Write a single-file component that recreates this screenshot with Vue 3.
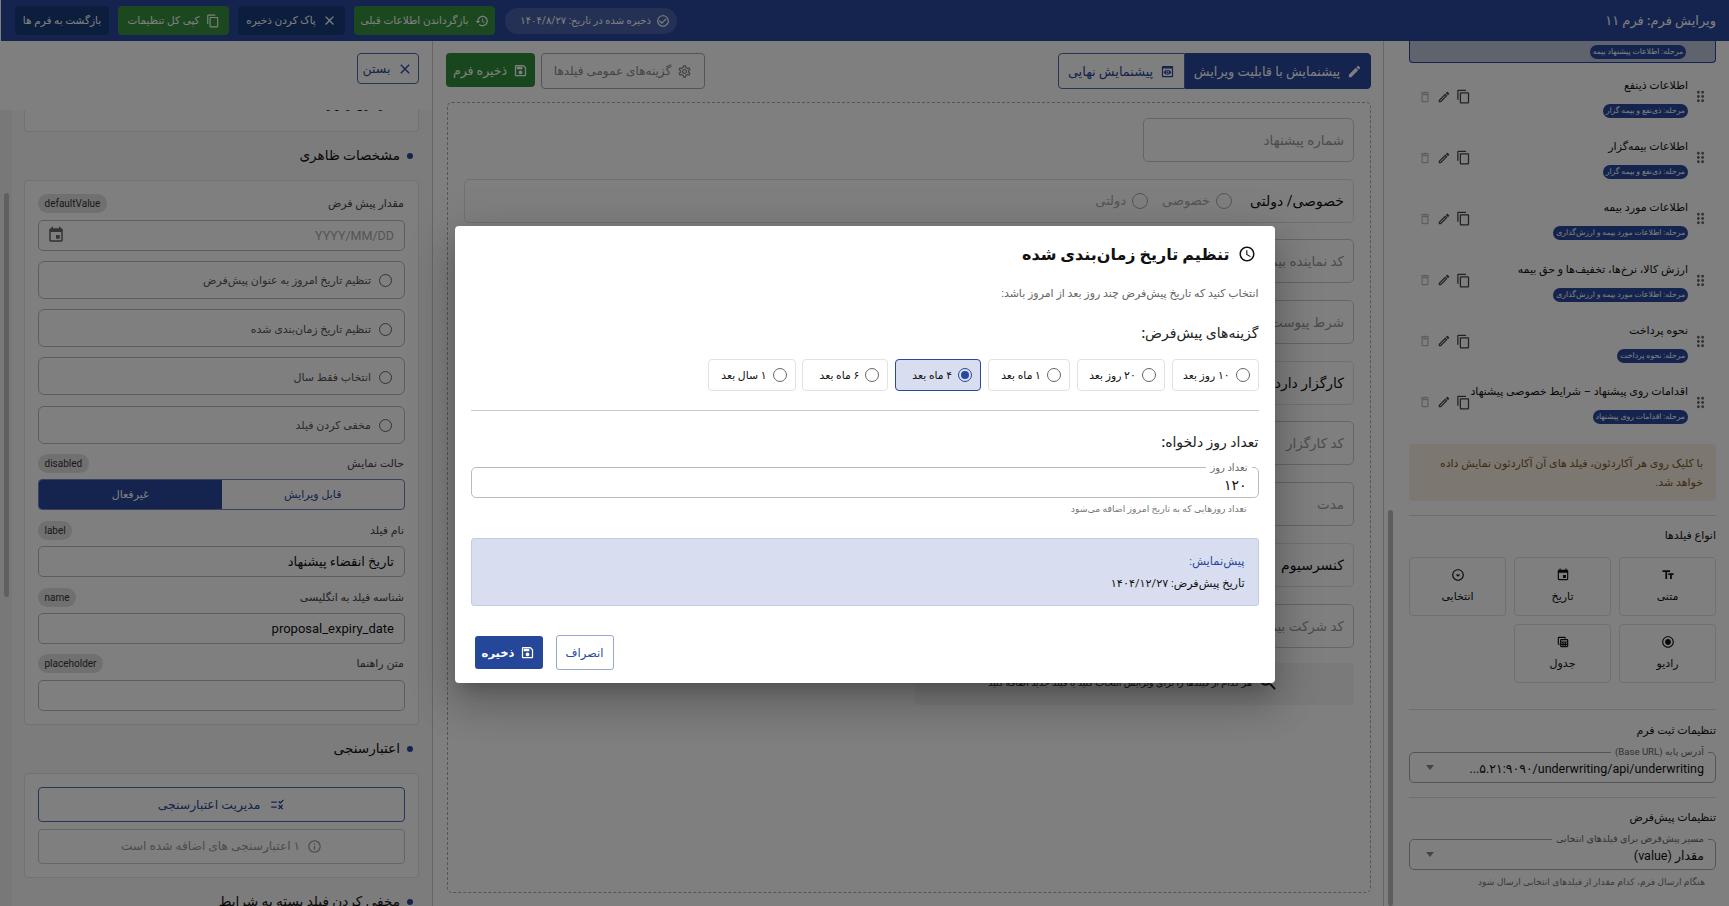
<script setup>
import { h } from 'vue'

const paths = {
  edit: 'M3 17.25V21h3.75L17.81 9.94l-3.75-3.75L3 17.25zM20.71 7.04c.39-.39.39-1.02 0-1.41l-2.34-2.34a.9959.9959 0 0 0-1.41 0l-1.83 1.83 3.75 3.75 1.83-1.83z',
  editO: 'M3 17.25V21h3.75L17.81 9.94l-3.75-3.75L3 17.25zM5.92 19H5v-.92l9.06-9.06.92.92L5.92 19zM20.71 5.63l-2.34-2.34c-.2-.2-.45-.29-.71-.29s-.51.1-.7.29l-1.83 1.83 3.75 3.75 1.83-1.83c.39-.39.39-1.02 0-1.41z',
  copy: 'M16 1H4c-1.1 0-2 .9-2 2v14h2V3h12V1zm3 4H8c-1.1 0-2 .9-2 2v14c0 1.1.9 2 2 2h11c1.1 0 2-.9 2-2V7c0-1.1-.9-2-2-2zm0 16H8V7h11v14z',
  close: 'M19 6.41 17.59 5 12 10.59 6.41 5 5 6.41 10.59 12 5 17.59 6.41 19 12 13.41 17.59 19 19 17.59 13.41 12z',
  trash: 'M6 19c0 1.1.9 2 2 2h8c1.1 0 2-.9 2-2V7H6v12zM8 9h8v10H8V9zm7.5-5-1-1h-5l-1 1H5v2h14V4z',
  grip: 'M11 18c0 1.1-.9 2-2 2s-2-.9-2-2 .9-2 2-2 2 .9 2 2zm-2-8c-1.1 0-2 .9-2 2s.9 2 2 2 2-.9 2-2-.9-2-2-2zm0-6c-1.1 0-2 .9-2 2s.9 2 2 2 2-.9 2-2-.9-2-2-2zm6 4c1.1 0 2-.9 2-2s-.9-2-2-2-2 .9-2 2 .9 2 2 2zm0 2c-1.1 0-2 .9-2 2s.9 2 2 2 2-.9 2-2-.9-2-2-2zm0 6c-1.1 0-2 .9-2 2s.9 2 2 2 2-.9 2-2-.9-2-2-2z',
  save: 'M17 3H5c-1.11 0-2 .9-2 2v14c0 1.1.89 2 2 2h14c1.1 0 2-.9 2-2V7l-4-4zm2 16H5V5h11.17L19 7.83V19zm-7-7c-1.66 0-3 1.34-3 3s1.34 3 3 3 3-1.34 3-3-1.34-3-3-3zM6 6h9v4H6z',
  check: 'M16.59 7.58 10 14.17l-3.59-3.58L5 12l5 5 8-8zM12 2C6.48 2 2 6.48 2 12s4.48 10 10 10 10-4.48 10-10S17.52 2 12 2zm0 18c-4.42 0-8-3.58-8-8s3.58-8 8-8 8 3.58 8 8-3.58 8-8 8z',
  restore: 'M13 3c-4.97 0-9 4.03-9 9H1l3.89 3.89.07.14L9 12H6c0-3.87 3.13-7 7-7s7 3.13 7 7-3.13 7-7 7c-1.93 0-3.68-.79-4.94-2.06l-1.42 1.42C8.27 19.99 10.51 21 13 21c4.97 0 9-4.03 9-9s-4.03-9-9-9zm-1 5v5l4.28 2.54.72-1.21-3.5-2.08V8H12z',
  clock: 'M11.99 2C6.47 2 2 6.48 2 12s4.47 10 9.99 10C17.52 22 22 17.52 22 12S17.52 2 11.99 2zM12 20c-4.42 0-8-3.58-8-8s3.58-8 8-8 8 3.58 8 8-3.58 8-8 8zm.5-13H11v6l5.25 3.15.75-1.23-4.5-2.67z',
  preview: 'M19 3H5c-1.11 0-2 .9-2 2v14c0 1.1.89 2 2 2h14c1.1 0 2-.9 2-2V5c0-1.1-.89-2-2-2zm0 16H5V7h14v12zm-5.5-6c0 .83-.67 1.5-1.5 1.5s-1.5-.67-1.5-1.5.67-1.5 1.5-1.5 1.5.67 1.5 1.5zM12 9c-2.73 0-5.06 1.66-6 4 .94 2.34 3.27 4 6 4s5.06-1.66 6-4c-.94-2.34-3.27-4-6-4zm0 6.5c-1.38 0-2.5-1.12-2.5-2.5s1.12-2.5 2.5-2.5 2.5 1.12 2.5 2.5-1.12 2.5-2.5 2.5z',
  gear: 'M19.43 12.98c.04-.32.07-.64.07-.98s-.03-.66-.07-.98l2.11-1.65c.19-.15.24-.42.12-.64l-2-3.46c-.12-.22-.39-.3-.61-.22l-2.49 1c-.52-.4-1.08-.73-1.69-.98l-.38-2.65C14.46 2.18 14.25 2 14 2h-4c-.25 0-.46.18-.49.42l-.38 2.65c-.61.25-1.17.59-1.69.98l-2.49-1c-.23-.09-.49 0-.61.22l-2 3.46c-.13.22-.07.49.12.64l2.11 1.65c-.04.32-.07.65-.07.98s.03.66.07.98l-2.11 1.65c-.19.15-.24.42-.12.64l2 3.46c.12.22.39.3.61.22l2.49-1c.52.4 1.08.73 1.69.98l.38 2.65c.03.24.24.42.49.42h4c.25 0 .46-.18.49-.42l.38-2.65c.61-.25 1.17-.59 1.69-.98l2.49 1c.23.09.49 0 .61-.22l2-3.46c.12-.22.07-.49-.12-.64l-2.11-1.65zm-1.98-1.71c.04.31.05.52.05.73s-.02.43-.05.73l-.14 1.13.89.7 1.08.84-.7 1.21-1.27-.51-1.04-.42-.9.68c-.43.32-.84.56-1.25.73l-1.06.43-.16 1.13-.2 1.35h-1.4l-.19-1.35-.16-1.13-1.06-.43c-.43-.18-.83-.41-1.23-.71l-.91-.7-1.06.43-1.27.51-.7-1.21 1.08-.84.89-.7-.14-1.13c-.03-.31-.05-.54-.05-.74s.02-.43.05-.73l.14-1.13-.89-.7-1.08-.84.7-1.21 1.27.51 1.04.42.9-.68c.43-.32.84-.56 1.25-.73l1.06-.43.16-1.13.2-1.35h1.39l.19 1.35.16 1.13 1.06.43c.43.18.83.41 1.23.71l.91.7 1.06-.43 1.27-.51.7 1.21-1.07.85-.89.7.14 1.13zM12 8c-2.21 0-4 1.79-4 4s1.79 4 4 4 4-1.79 4-4-1.79-4-4-4zm0 6c-1.1 0-2-.9-2-2s.9-2 2-2 2 .9 2 2-.9 2-2 2z',
  event: 'M17 12h-5v5h5v-5zM16 1v2H8V1H6v2H5c-1.11 0-1.99.9-1.99 2L3 19c0 1.1.89 2 2 2h14c1.1 0 2-.9 2-2V5c0-1.1-.9-2-2-2h-1V1h-2zm3 18H5V8h14v11z',
  info: 'M11 7h2v2h-2zm0 4h2v6h-2zm1-9C6.48 2 2 6.48 2 12s4.48 10 10 10 10-4.48 10-10S17.52 2 12 2zm0 18c-4.41 0-8-3.59-8-8s3.59-8 8-8 8 3.59 8 8-3.59 8-8 8z',
  rule: 'M16.54 11 13 7.46l1.41-1.41 2.12 2.12 4.24-4.24 1.41 1.41L16.54 11zM11 7H2v2h9V7zm10 6.41L19.59 12 17 14.59 14.41 12 13 13.41 15.59 16 13 18.59 14.41 20 17 17.41 19.59 20 21 18.59 18.41 16 21 13.41zM11 15H2v2h9v-2z',
  text: 'M2.5 4v3h5v12h3V7h5V4h-13zm19 5h-9v3h3v7h3v-7h3V9z',
  select: 'M12 4c4.41 0 8 3.59 8 8s-3.59 8-8 8-8-3.59-8-8 3.59-8 8-8m0-2C6.48 2 2 6.48 2 12s4.48 10 10 10 10-4.48 10-10S17.52 2 12 2zm0 13-4-4h8l-4 4z',
  radio: 'M12 7c-2.76 0-5 2.24-5 5s2.24 5 5 5 5-2.24 5-5-2.24-5-5-5zm0-5C6.48 2 2 6.48 2 12s4.48 10 10 10 10-4.48 10-10S17.52 2 12 2zm0 18c-4.42 0-8-3.58-8-8s3.58-8 8-8 8 3.58 8 8-3.58 8-8 8z',
  table: 'M19 7H9c-1.1 0-2 .9-2 2v10c0 1.1.9 2 2 2h10c1.1 0 2-.9 2-2V9c0-1.1-.9-2-2-2zm0 2v2H9V9h10zm-6 6v-2h2v2h-2zm2 2v2h-2v-2h2zm-4-2H9v-2h2v2zm6-2h2v2h-2v-2zm-8 4h2v2H9v-2zm8 2v-2h2v2h-2zM6 17H5c-1.1 0-2-.9-2-2V5c0-1.1.9-2 2-2h10c1.1 0 2 .9 2 2v1h-2V5H5v10h1v2z',
  search: 'M15.5 14h-.79l-.28-.27C15.41 12.59 16 11.11 16 9.5 16 5.91 13.09 3 9.5 3S3 5.91 3 9.5 5.91 16 9.5 16c1.61 0 3.09-.59 4.23-1.57l.27.28v.79l5 4.99L20.49 19l-4.99-5zm-6 0C7.01 14 5 11.99 5 9.5S7.01 5 9.5 5 14 7.01 14 9.5 11.99 14 9.5 14z'
}
const Ico = (p) => h('svg', { viewBox: '0 0 24 24', width: p.s || 16, height: p.s || 16, fill: 'currentColor', style: 'flex:none;display:block' }, [h('path', { d: paths[p.n] })])
Ico.props = ['n', 's']

const items = [
  { t: 'اطلاعات ذینفع', c: 'مرحله: ذی‌نفع و بیمه گزار' },
  { t: 'اطلاعات بیمه‌گزار', c: 'مرحله: ذی‌نفع و بیمه گزار' },
  { t: 'اطلاعات مورد بیمه', c: 'مرحله: اطلاعات مورد بیمه و ارزش‌گذاری' },
  { t: 'ارزش کالا، نرخ‌ها، تخفیف‌ها و حق بیمه', c: 'مرحله: اطلاعات مورد بیمه و ارزش‌گذاری' },
  { t: 'نحوه پرداخت', c: 'مرحله: نحوه پرداخت' },
  { t: 'اقدامات روی پیشنهاد – شرایط خصوصی پیشنهاد', c: 'مرحله: اقدامات روی پیشنهاد' }
]
const types = [
  { n: 'text', t: 'متنی' }, { n: 'event', t: 'تاریخ' }, { n: 'select', t: 'انتخابی' },
  { n: 'radio', t: 'رادیو' }, { n: 'table', t: 'جدول' }
]
const fields = [
  { t: 'شماره پیشنهاد' }, { t: 'خصوصی/ دولتی', full: 1, radios: ['خصوصی', 'دولتی'] },
  { t: 'کد نماینده بیمه' }, { t: 'شرط پیوست' }, { t: 'کارگزار دارد؟', full: 1 },
  { t: 'کد کارگزار' }, { t: 'مدت' }, { t: 'کنسرسیوم', full: 1 }, { t: 'کد شرکت بیمه' }
]
const presets = [
  { t: '۱۰ روز بعد', w: 87 }, { t: '۲۰ روز بعد', w: 88 }, { t: '۱ ماه بعد', w: 82 },
  { t: '۴ ماه بعد', w: 86, on: 1 }, { t: '۶ ماه بعد', w: 86 }, { t: '۱ سال بعد', w: 88 }
]
const radios = ['تنظیم تاریخ امروز به عنوان پیش‌فرض', 'تنظیم تاریخ زمان‌بندی شده', 'انتخاب فقط سال', 'مخفی کردن فیلد']
</script>

<template>
  <div class="app">
    <header class="top">
      <div class="title">ویرایش فرم: فرم ۱۱</div>
      <div class="actions">
        <div class="saved"><Ico n="check" s="14" /><span>ذخیره شده در تاریخ: ۱۴۰۴/۸/۲۷</span></div>
        <button class="hb green w1"><Ico n="restore" s="14" />بازگرداندن اطلاعات قبلی</button>
        <button class="hb navy w2"><Ico n="close" s="15" />پاک کردن ذخیره</button>
        <button class="hb green w3"><Ico n="copy" s="14" />کپی کل تنظیمات</button>
        <button class="hb navy w4">بازگشت به فرم ها</button>
      </div>
    </header>

    <main class="body">
      <aside class="right">
        <div class="bar"></div>
        <div class="sel-card"><span class="step">مرحله: اطلاعات پیشنهاد بیمه</span></div>
        <div v-for="it in items" :key="it.t" class="item">
          <Ico n="grip" s="17" class="grip" />
          <div class="item-main">
            <div class="item-t">{{ it.t }}</div>
            <span class="step">{{ it.c }}</span>
          </div>
          <div class="item-icons">
            <Ico n="copy" s="15" />
            <Ico n="editO" s="14" />
            <Ico n="trash" s="14" class="off" />
          </div>
        </div>
        <div class="note">با کلیک روی هر آکاردئون، فیلد های آن آکاردئون نمایش داده خواهد شد.</div>
        <hr class="rule d1" />
        <div class="sub">انواع فیلدها</div>
        <div class="types">
          <div v-for="t in types" :key="t.t" class="type">
            <Ico :n="t.n" s="14" />
            <span>{{ t.t }}</span>
          </div>
        </div>
        <hr class="rule d2" />
        <div class="sub">تنظیمات ثبت فرم</div>
        <div class="sel">
          <span class="leg">آدرس پایه (Base URL)</span>
          <bdi class="val ltr">...۵.۲۱:۹۰۹۰/underwriting/api/underwriting</bdi>
          <i class="caret"></i>
        </div>
        <hr class="rule d3" />
        <div class="sub">تنظیمات پیش‌فرض</div>
        <div class="sel">
          <span class="leg">مسیر پیش‌فرض برای فیلدهای انتخابی</span>
          <span class="val">مقدار (value)</span>
          <i class="caret"></i>
        </div>
        <div class="help">هنگام ارسال فرم، کدام مقدار از فیلدهای انتخابی ارسال شود</div>
      </aside>

      <section class="center">
        <div class="toolbar">
          <div class="tabs">
            <button class="tab on"><Ico n="edit" s="15" />پیشنمایش با قابلیت ویرایش</button>
            <button class="tab"><Ico n="preview" s="15" />پیشنمایش نهایی</button>
          </div>
          <div class="tools">
            <button class="gearb"><Ico n="gear" s="15" />گزینه‌های عمومی فیلدها</button>
            <button class="saveb"><Ico n="save" s="15" />ذخیره فرم</button>
          </div>
        </div>
        <div class="canvas">
          <div v-for="f in fields" :key="f.t" class="fld" :class="{ full: f.full }">
            <span :class="f.full ? 'fld-b' : 'fld-p'">{{ f.t }}</span>
            <span v-for="r in f.radios" :key="r" class="fr"><i class="dot"></i>{{ r }}</span>
          </div>
          <div class="hint"><Ico n="search" s="22" /><span>هر کدام از فیلدها را برای ویرایش انتخاب کنید یا فیلد جدید اضافه کنید</span></div>
        </div>
      </section>

      <aside class="left">
        <div class="left-top">
          <button class="closeb"><Ico n="close" s="16" />بستن</button>
        </div>
        <div class="scroll">
          <div class="track"><div class="thumb"></div></div>
          <div class="card first"><p class="clip">مقدار تاریخ را وارد کنید</p></div>
          <h3 class="sec">مشخصات ظاهری</h3>
          <div class="card stack">
            <div class="grp">
              <div class="lab"><span>مقدار پیش فرض</span><em>defaultValue</em></div>
              <div class="inp date"><span class="ph">YYYY/MM/DD</span><Ico n="event" s="18" /></div>
            </div>
            <label v-for="r in radios" :key="r" class="rad"><i class="dot"></i>{{ r }}</label>
            <div class="grp">
              <div class="lab"><span>حالت نمایش</span><em>disabled</em></div>
              <div class="toggle"><span>قابل ویرایش</span><span class="act">غیرفعال</span></div>
            </div>
            <div class="grp">
              <div class="lab"><span>نام فیلد</span><em>label</em></div>
              <div class="inp fa">تاریخ انقضاء پیشنهاد</div>
            </div>
            <div class="grp">
              <div class="lab"><span>شناسه فیلد به انگلیسی</span><em>name</em></div>
              <div class="inp en">proposal_expiry_date</div>
            </div>
            <div class="grp">
              <div class="lab"><span>متن راهنما</span><em>placeholder</em></div>
              <div class="inp"></div>
            </div>
          </div>
          <h3 class="sec">اعتبارسنجی</h3>
          <div class="card vstack">
            <button class="manage"><Ico n="rule" s="15" />مدیریت اعتبارسنجی</button>
            <div class="vinfo"><Ico n="info" s="15" />۱ اعتبارسنجی های اضافه شده است</div>
          </div>
          <h3 class="sec">مخفی کردن فیلد بسته به شرایط</h3>
        </div>
      </aside>
    </main>

    <div class="overlay">
      <div class="modal">
        <h2 class="m-title"><Ico n="clock" s="18" />تنظیم تاریخ زمان‌بندی شده</h2>
        <p class="m-sub">انتخاب کنید که تاریخ پیش‌فرض چند روز بعد از امروز باشد:</p>
        <h4 class="m-h">گزینه‌های پیش‌فرض:</h4>
        <div class="presets">
          <div v-for="p in presets" :key="p.t" class="preset" :class="{ on: p.on }" :style="{ width: p.w + 'px' }">
            <i class="dot" :class="{ chk: p.on }"></i>{{ p.t }}
          </div>
        </div>
        <hr class="m-rule" />
        <h4 class="m-h h2">تعداد روز دلخواه:</h4>
        <div class="m-inp"><span class="m-leg">تعداد روز</span>۱۲۰</div>
        <div class="m-help">تعداد روزهایی که به تاریخ امروز اضافه می‌شود</div>
        <div class="m-prev">
          <div class="pv-t">پیش‌نمایش:</div>
          <div class="pv-d">تاریخ پیش‌فرض: ۱۴۰۴/۱۲/۲۷</div>
        </div>
        <div class="m-foot">
          <button class="cancel">انصراف</button>
          <button class="ok"><Ico n="save" s="15" />ذخیره</button>
        </div>
      </div>
    </div>
  </div>
</template>

<style>
html, body { margin: 0; padding: 0; overflow: hidden; }
</style>

<style scoped>
.app { width: 1729px; height: 906px; overflow: hidden; position: relative; direction: rtl; display: flex; flex-direction: column; background: #fff; color: #111; font-family: "Roboto", "DejaVu Sans", sans-serif; font-size: 12px; }
button { font-family: inherit; cursor: pointer; display: flex; align-items: center; justify-content: center; border: 0; padding: 0; }
h2, h3, h4, p { margin: 0; }
hr { border: 0; margin: 0; }
em { font-style: normal; }
i { display: block; }

.top { height: 41px; flex: none; background: #28489c; display: flex; align-items: center; justify-content: space-between; padding: 0 13px 0 14px; box-sizing: border-box; margin-left: 1px; }
.title { color: #fff; font-size: 13px; font-weight: 500; }
.actions { display: flex; align-items: center; gap: 9px; }
.saved { display: flex; align-items: center; gap: 5px; height: 26px; width: 172px; box-sizing: border-box; padding: 0 7px; border-radius: 13px; background: rgba(255,255,255,.15); color: #fff; font-size: 10px; white-space: nowrap; margin-left: 1px; }
.hb { height: 29px; border-radius: 4px; color: #fff; font-size: 10.5px; gap: 6px; white-space: nowrap; }
.green { background: #36903e; }
.navy { background: #163c7c; }
.w1 { width: 141px; }
.w2 { width: 107px; }
.w3 { width: 111px; }
.w4 { width: 94px; }

.body { flex: 1; min-height: 0; display: flex; }

.right { width: 346px; flex: none; box-sizing: border-box; padding: 0 13px 0 25px; position: relative; border-left: 1px solid #cfcfcf; overflow: hidden; }
.bar { position: absolute; left: 4px; top: 469px; bottom: 0; width: 5px; background: #bdbdbd; border-radius: 3px; }
.sel-card { height: 22px; box-sizing: border-box; background: #bcc6dc; border: 1px solid #28489c; border-top: 0; border-radius: 0 0 4px 4px; padding-right: 29px; display: flex; align-items: center; }
.step { display: inline-block; height: 14px; line-height: 14px; background: #28489c; color: #fff; font-size: 7.7px; padding: 0 3px; border-radius: 7px; white-space: nowrap; }
.item { height: 61.2px; display: flex; align-items: center; padding-right: 7px; box-sizing: border-box; position: relative; }
.grip { color: #666; margin-left: 4px; margin-top: 6px; }
.item-main { flex: 1; padding-top: 13px; height: 100%; box-sizing: border-box; }
.item-t { height: 20px; line-height: 20px; font-size: 11px; margin-bottom: 6px; white-space: nowrap; }
.item-icons { position: absolute; left: 9px; top: 26px; display: flex; gap: 5px; color: #444; align-items: center; }
.off { color: #bbb; }
.note { margin-top: 14px; height: 57px; box-sizing: border-box; padding: 10px 13px; background: #f8f0e3; border-radius: 4px; color: #7d5a1e; font-size: 11px; line-height: 19px; }
.rule { border-top: 1px solid #ddd; }
.d1 { margin: 14px 0 10px; }
.d2 { margin: 26px 0 11px; }
.d3 { margin: 14px 0 10px; }
.sub { height: 20px; line-height: 20px; font-size: 11px; font-weight: 500; margin-bottom: 11px; }
.types { display: grid; grid-template-columns: repeat(3, 1fr); gap: 8px; }
.type { height: 59px; border: 1px solid #e0e0e0; border-radius: 4px; box-sizing: border-box; display: flex; flex-direction: column; align-items: center; justify-content: center; gap: 8px; font-size: 11px; padding-bottom: 3px; }
.sel { height: 31px; border: 1px solid #aaa; border-radius: 5px; box-sizing: border-box; position: relative; display: flex; align-items: center; justify-content: space-between; padding: 0 11px 0 16px; }
.leg { position: absolute; top: -7px; right: 7px; background: #fff; padding: 0 4px; font-size: 9.6px; color: #666; line-height: 12px; white-space: nowrap; }
.val { font-size: 12.5px; padding-top: 2px; white-space: nowrap; }
.caret { width: 0; height: 0; border: 4px solid transparent; border-top: 5px solid #888; border-bottom: 0; }
.help { margin-top: 6px; padding-right: 11px; font-size: 9.2px; color: #777; white-space: nowrap; }

.center { flex: 1; min-width: 0; box-sizing: border-box; padding: 12px 12px 13px 13px; display: flex; flex-direction: column; gap: 13px; }
.toolbar { display: flex; justify-content: space-between; align-items: center; height: 36px; }
.tabs { display: flex; }
.tab { height: 36px; width: 127px; gap: 7px; background: #fff; border: 1px solid #4d69ad; color: #28489c; font-size: 12.9px; border-radius: 4px 0 0 4px; white-space: nowrap; }
.tab.on { width: 186px; background: #28489c; border-color: #28489c; color: #fff; border-radius: 0 4px 4px 0; }
.tools { display: flex; gap: 6px; }
.gearb { height: 36px; width: 164px; gap: 6px; background: #fff; border: 1px solid #aaa; color: #888; font-size: 12px; border-radius: 4px; white-space: nowrap; }
.saveb { height: 34px; width: 89px; gap: 6px; background: #338f3b; color: #fff; font-size: 12.5px; border-radius: 4px; white-space: nowrap; }
.canvas { flex: 1; margin-left: 1px; border: 1px dashed #aaa; border-radius: 5px; padding: 15px 16px; display: flex; flex-direction: column; align-items: flex-start; gap: 16.7px; }
.fld { width: 211px; height: 44px; box-sizing: border-box; border: 1px solid #ccc; border-radius: 5px; display: flex; align-items: center; padding: 0 9px; gap: 14px; background: #fff; }
.fld.full { width: 100%; border-color: #e2e2e2; }
.fld-p { color: #999; font-size: 13.5px; }
.fld-b { color: #111; font-size: 14px; margin-left: 4px; }
.fr { display: flex; align-items: center; gap: 6px; color: #aaa; font-size: 13px; }
.dot { width: 13px; height: 13px; border: 1.5px solid #666; border-radius: 50%; box-sizing: border-box; flex: none; position: relative; }
.fr .dot { width: 16px; height: 16px; border-color: #aaa; }
.dot.chk { border-color: #28489c; }
.dot.chk::after { content: ""; position: absolute; inset: 2px; border-radius: 50%; background: #28489c; }
.hint { width: 439px; height: 42px; margin-top: -1px; box-sizing: border-box; background: #f5f5f5; border-radius: 4px; display: flex; align-items: center; padding: 0 75px 4px 0; gap: 5px; font-size: 9.5px; color: #222; white-space: nowrap; }

.left { width: 433px; flex: none; display: flex; flex-direction: column; border-right: 1px solid #ccc; box-sizing: border-box; overflow: hidden; }
.left-top { height: 69px; flex: none; padding: 12px 13px 0 0; box-sizing: border-box; background: #fff; }
.closeb { width: 62px; height: 31px; gap: 7px; background: #fff; border: 1px solid #4d69ad; border-radius: 4px; color: #28489c; font-size: 12.5px; }
.scroll { flex: 1; min-height: 0; position: relative; background: #f8f8f8; padding: 0 13px 0 24px; overflow: hidden; }
.track { position: absolute; left: 0; top: 0; bottom: 0; width: 12px; background: #f1f1f1; }
.thumb { position: absolute; left: 4px; width: 5px; top: 83px; height: 404px; background: #c1c1c1; border-radius: 3px; }
.card { background: #fff; border: 1px solid #e4e4e4; border-radius: 4px; box-sizing: border-box; padding: 0 13px; }
.card.first { height: 22px; border-top: 0; border-radius: 0 0 4px 4px; overflow: hidden; }
.clip { font-size: 11px; line-height: 16px; margin-top: -13px; }
.sec { height: 20px; line-height: 18px; margin: 14px 0; font-size: 13.6px; font-weight: 500; padding-right: 19px; position: relative; white-space: nowrap; }
.sec::before { content: ""; position: absolute; right: 6px; top: 7px; width: 6px; height: 6px; border-radius: 50%; background: #28489c; }
.stack { padding-top: 13px; padding-bottom: 13px; display: flex; flex-direction: column; gap: 10.3px; }
.grp { display: flex; flex-direction: column; gap: 6.5px; }
.lab { height: 19px; display: flex; align-items: center; justify-content: space-between; font-size: 11px; color: #444; padding-right: 1px; }
.lab em { height: 19px; line-height: 19px; padding: 0 6.5px; border-radius: 10px; background: #e0e0e0; color: #333; font-size: 10px; direction: ltr; }
.inp { height: 31px; border: 1px solid #bbb; border-radius: 5px; box-sizing: border-box; display: flex; align-items: center; padding: 0 10px; font-size: 12px; color: #111; }
.inp.fa { font-size: 13px; }
.inp.en { font-size: 13px; }
.date { justify-content: space-between; color: #666; padding-left: 8px; }
.ph { color: #aaa; font-size: 12.5px; }
.rad { height: 38px; border: 1px solid #bbb; border-radius: 6px; box-sizing: border-box; display: flex; align-items: center; gap: 8px; padding: 2px 12px 0; font-size: 11px; color: #555; }
.toggle { height: 31px; display: flex; border: 1px solid #6f86bd; border-radius: 4px; box-sizing: border-box; overflow: hidden; }
.toggle span { flex: 1; display: flex; align-items: center; justify-content: center; font-size: 11px; color: #28489c; }
.toggle .act { background: #28489c; color: #fff; }
.vstack { height: 105px; padding-top: 13px; display: flex; flex-direction: column; gap: 7px; }
.manage { height: 35px; flex: none; gap: 10px; background: #fff; border: 1px solid #4d69ad; border-radius: 4px; color: #28489c; font-size: 12.4px; }
.vinfo { height: 35px; flex: none; border: 1px solid #ccc; border-radius: 4px; box-sizing: border-box; display: flex; align-items: center; justify-content: center; gap: 7px; color: #999; font-size: 12.2px; }

.overlay { position: absolute; inset: 0; background: rgba(0,0,0,.5); display: flex; align-items: center; justify-content: center; padding-top: 3px; box-sizing: border-box; }
.modal { width: 820px; height: 457px; box-sizing: border-box; background: #fff; border-radius: 4px; box-shadow: 0 11px 15px -7px rgba(0,0,0,.2), 0 24px 38px 3px rgba(0,0,0,.14), 0 9px 46px 8px rgba(0,0,0,.12); padding: 0 16px; }
.m-title { display: flex; align-items: center; gap: 8px; height: 28px; margin-top: 14px; padding-right: 3px; font-size: 16px; font-weight: 700; color: #111; }
.m-sub { margin-top: 17px; height: 18px; line-height: 18px; font-size: 11px; color: #666; }
.m-h { margin-top: 19px; height: 22px; line-height: 22px; font-size: 14px; font-weight: 500; color: #222; }
.presets { display: flex; gap: 6.8px; margin-top: 15px; }
.preset { height: 32px; box-sizing: border-box; border: 1px solid #e2e2e2; border-radius: 4px; display: flex; align-items: center; gap: 6px; padding: 0 8px; font-size: 10.8px; white-space: nowrap; }
.preset .dot { width: 14px; height: 14px; }
.preset.on { background: #d8deef; border-color: #28489c; }
.m-rule { border-top: 1px solid #ccc; margin-top: 19px; }
.h2 { margin-top: 20px; }
.m-inp { margin-top: 14px; height: 31px; border: 1px solid #bbb; border-radius: 5px; box-sizing: border-box; position: relative; padding: 5px 11px 0; font-size: 14px; color: #111; display: flex; align-items: center; }
.m-leg { position: absolute; top: -6px; right: 6px; background: #fff; padding: 0 4px; font-size: 10px; line-height: 12px; color: #666; }
.m-help { margin-top: 5px; padding-right: 12px; height: 12px; line-height: 12px; font-size: 9.3px; color: #777; }
.m-prev { margin-top: 23px; height: 68px; box-sizing: border-box; background: #d8deef; border: 1px solid #c3cce3; border-radius: 3px; padding: 12px 13px; }
.pv-t { height: 20px; line-height: 20px; font-size: 11.5px; color: #28489c; }
.pv-d { margin-top: 3px; height: 20px; line-height: 20px; font-size: 11.2px; color: #111; }
.m-foot { margin-top: 29px; display: flex; justify-content: flex-end; align-items: center; gap: 13px; padding-left: 4px; }
.cancel { width: 58px; height: 35px; background: #fff; border: 1px solid #9aa8ca; border-radius: 3px; color: #28489c; font-size: 11.5px; }
.ok { width: 68px; height: 33px; gap: 6px; background: #25479a; border-radius: 3px; color: #fff; font-size: 11.5px; font-weight: 600; }
</style>
